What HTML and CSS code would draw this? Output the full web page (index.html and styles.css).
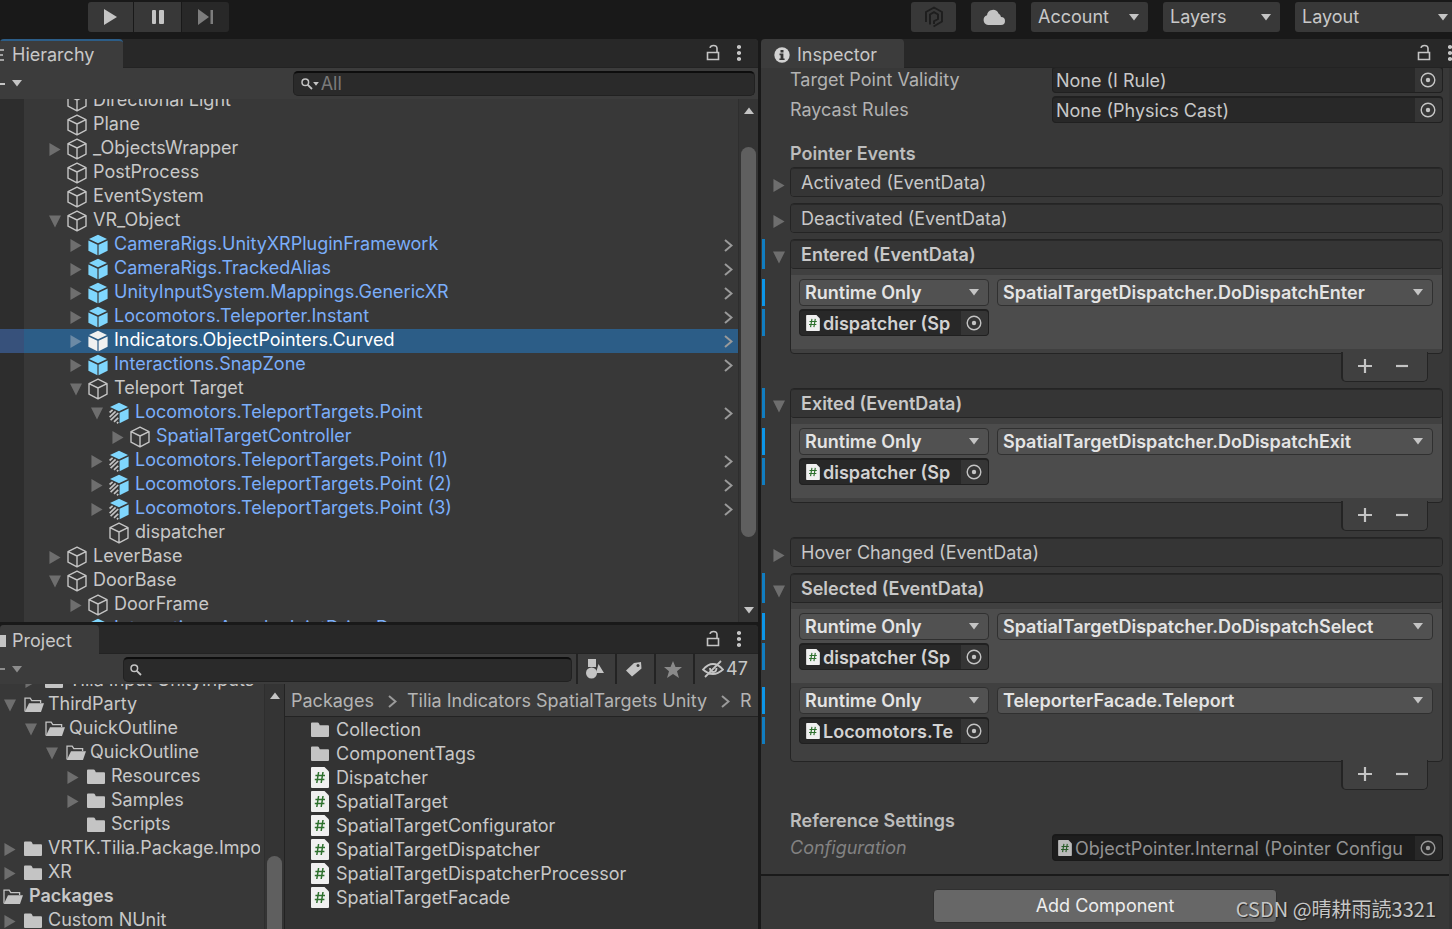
FILE: index.html
```html
<!DOCTYPE html>
<html lang="en">
<head>
<meta charset="utf-8">
<title>Editor</title>
<link rel="stylesheet" href="styles.css">
</head>
<body>
<svg class="sprites" aria-hidden="true">
  <symbol id="cube" viewBox="0 0 20 22"><path d="M10 1.2 19 5.6V16.2L10 20.8 1 16.2V5.6ZM1 5.6 10 10 19 5.6M10 10V20.8" fill="none" stroke="#c4c4c4" stroke-width="1.4" stroke-linejoin="round"/></symbol>
  <symbol id="prefab" viewBox="0 0 20 22"><path d="M10 .8 19 5 10 9.2 1 5ZM.4 6.5 9.4 10.7V21.2L.4 16.8ZM19.6 6.5 10.6 10.7V21.2L19.6 16.8Z" fill="currentColor"/></symbol>
  <symbol id="variant" viewBox="0 0 20 22"><path d="M10 .8 19 5 10 9.2 1 5ZM19.6 6.5 10.6 10.7V21.2L19.6 16.8Z" fill="currentColor"/><path d="M.6 10.5 3.6 7.8M.6 15.2 6.6 9.4M1.6 18.2 9.2 11M5 19.8 9.2 15.8M8 21.3 9.2 20" stroke="#c4c4c4" stroke-width="1.7" fill="none"/></symbol>
  <symbol id="right" viewBox="0 0 12 14"><path d="M0 0 12 7 0 14Z" fill="currentColor"/></symbol>
  <symbol id="down" viewBox="0 0 12 12"><path d="M0 0H12L6 12Z" fill="currentColor"/></symbol>
  <symbol id="caret" viewBox="0 0 10 7"><path d="M0 0H10L5 6.5Z" fill="currentColor"/></symbol>
  <symbol id="chevron" viewBox="0 0 9 13"><path d="M1 1 7.5 6.5 1 12" fill="none" stroke="currentColor" stroke-width="2"/></symbol>
  <symbol id="folder" viewBox="0 0 20 20"><path d="M0 3.5Q0 2.5 1 2.5H6.5Q7.5 2.5 8 3.5L8.8 5.2H17Q18 5.2 18 6.2V16Q18 17 17 17H1Q0 17 0 16Z" fill="#c4c4c4"/></symbol>
  <symbol id="open" viewBox="0 0 20 20"><path d="M1 16.5V3.2H6.2L7.8 5.6H16.6V8" fill="none" stroke="#c4c4c4" stroke-width="1.3"/><path d="M5 8.2H20L17 17H.8Z" fill="#c4c4c4"/></symbol>
  <symbol id="script" viewBox="0 0 18 21"><path d="M1 0H13.5L18 4.5V20Q18 21 17 21H1Q0 21 0 20V1Q0 0 1 0Z" fill="#f0f0f0"/><path d="M7.6 5 5.8 16M12 5 10.2 16M4.4 8.6H14M3.8 12.4H13.4" stroke="#2d702d" stroke-width="1.5" fill="none"/></symbol>
  <symbol id="lock" viewBox="0 0 14 17"><path d="M1.5 8.5H12.5V15.5H1.5ZM11 8V4.5Q11 1.5 7.5 1.5 4.5 1.5 4 3.8" fill="none" stroke="#c4c4c4" stroke-width="1.6"/></symbol>
  <symbol id="dots" viewBox="0 0 4 16"><path d="M0 1Q2-1 4 1V3Q2 5 0 3ZM0 7Q2 5 4 7V9Q2 11 0 9ZM0 13Q2 11 4 13V15Q2 17 0 15Z" fill="#c4c4c4"/></symbol>
  <symbol id="search" viewBox="0 0 14 12"><circle cx="4.3" cy="4.3" r="3.3" fill="none" stroke="#c4c4c4" stroke-width="1.5"/><path d="M6.8 6.8 11 11" stroke="#c4c4c4" stroke-width="1.8"/></symbol>
  <symbol id="target" viewBox="0 0 16 16"><circle cx="8" cy="8" r="6.8" fill="none" stroke="currentColor" stroke-width="1.4"/><circle cx="8" cy="8" r="2.2" fill="currentColor"/></symbol>
  <symbol id="plus" viewBox="0 0 14 14"><path d="M7 0V14M0 7H14" stroke="#c4c4c4" stroke-width="2.2"/></symbol>
  <symbol id="minus" viewBox="0 0 12 14"><path d="M0 7H12" stroke="#c4c4c4" stroke-width="2.2"/></symbol>
</svg>

<header class="topbar">
  <div class="play-group">
    <button class="tool" aria-label="Play"><svg width="13" height="16" viewBox="0 0 13 16"><path d="M0 0 13 8 0 16Z" fill="#c4c4c4"/></svg></button>
    <button class="tool" aria-label="Pause"><svg width="14" height="16" viewBox="0 0 14 16"><rect x="1" y="1" width="4" height="14" rx="1" fill="#c4c4c4"/><rect x="8" y="1" width="5" height="14" rx="1" fill="#c4c4c4"/></svg></button>
    <button class="tool off" aria-label="Step"><svg width="16" height="16" viewBox="0 0 16 16"><path d="M0 0 11 8 0 16ZM12.5 1H15V15H12.5Z" fill="#7d7d7d"/></svg></button>
  </div>
  <div class="top-right">
    <button class="tool round" aria-label="Plastic SCM"><svg width="20" height="22" viewBox="0 0 20 22"><path d="M2 16V6L10 1.5 18 6V15.5L9.5 20.5M6 18.5V8.5L10 6.2 14 8.5V13L10 15.3V18" fill="none" stroke="#1e1e1e" stroke-width="1.9"/></svg></button>
    <button class="tool round" aria-label="Cloud"><svg width="22" height="16" viewBox="0 0 22 16"><path d="M5 16A5 5 0 0 1 4 6.3 6 6 0 0 1 15.5 4.5 4.5 4.5 0 0 1 18 8 4 4 0 0 1 18 16Z" fill="#c4c4c4"/></svg></button>
    <div class="drop"><select aria-label="Account"><option>Account</option></select><svg class="caret"><use href="#caret"/></svg></div>
    <div class="drop"><select aria-label="Layers"><option>Layers</option></select><svg class="caret"><use href="#caret"/></svg></div>
    <div class="drop wide"><select aria-label="Layout"><option>Layout</option></select><svg class="caret"><use href="#caret"/></svg></div>
  </div>
</header>

<main class="workspace">
  <div class="left">
    <section class="panel hierarchy">
      <div class="tabs">
        <button class="tab active"><svg width="4" height="12" viewBox="0 0 4 12"><path d="M0 1H4M0 6H3M0 11H4" stroke="#c4c4c4" stroke-width="1.4"/></svg>Hierarchy</button>
        <div class="tab-tools"><svg class="lock"><use href="#lock"/></svg><svg class="dots"><use href="#dots"/></svg></div>
      </div>
      <div class="bar">
        <button class="add" aria-label="Create"><i></i><svg class="caret"><use href="#caret"/></svg></button>
        <label class="search hsearch"><svg width="14" height="12"><use href="#search"/></svg><svg class="mini"><use href="#caret"/></svg><input type="text" placeholder="All" aria-label="Search hierarchy"></label>
      </div>
      <div class="view">
        <ul class="tree scene">
          <li class="l0"><svg class="cube"><use href="#cube"/></svg><span>Directional Light</span></li>
          <li class="l0"><svg class="cube"><use href="#cube"/></svg><span>Plane</span></li>
          <li class="l0"><svg class="fold"><use href="#right"/></svg><svg class="cube"><use href="#cube"/></svg><span>_ObjectsWrapper</span></li>
          <li class="l0"><svg class="cube"><use href="#cube"/></svg><span>PostProcess</span></li>
          <li class="l0"><svg class="cube"><use href="#cube"/></svg><span>EventSystem</span></li>
          <li class="l0"><svg class="fold"><use href="#down"/></svg><svg class="cube"><use href="#cube"/></svg><span>VR_Object</span></li>
          <li class="l1 pre"><svg class="fold"><use href="#right"/></svg><svg class="cube"><use href="#prefab"/></svg><span>CameraRigs.UnityXRPluginFramework</span><svg class="chev"><use href="#chevron"/></svg></li>
          <li class="l1 pre"><svg class="fold"><use href="#right"/></svg><svg class="cube"><use href="#prefab"/></svg><span>CameraRigs.TrackedAlias</span><svg class="chev"><use href="#chevron"/></svg></li>
          <li class="l1 pre"><svg class="fold"><use href="#right"/></svg><svg class="cube"><use href="#prefab"/></svg><span>UnityInputSystem.Mappings.GenericXR</span><svg class="chev"><use href="#chevron"/></svg></li>
          <li class="l1 pre"><svg class="fold"><use href="#right"/></svg><svg class="cube"><use href="#prefab"/></svg><span>Locomotors.Teleporter.Instant</span><svg class="chev"><use href="#chevron"/></svg></li>
          <li class="l1 pre sel"><svg class="fold"><use href="#right"/></svg><svg class="cube"><use href="#prefab"/></svg><span>Indicators.ObjectPointers.Curved</span><svg class="chev"><use href="#chevron"/></svg></li>
          <li class="l1 pre"><svg class="fold"><use href="#right"/></svg><svg class="cube"><use href="#prefab"/></svg><span>Interactions.SnapZone</span><svg class="chev"><use href="#chevron"/></svg></li>
          <li class="l1"><svg class="fold"><use href="#down"/></svg><svg class="cube"><use href="#cube"/></svg><span>Teleport Target</span></li>
          <li class="l2 pre"><svg class="fold"><use href="#down"/></svg><svg class="cube"><use href="#variant"/></svg><span>Locomotors.TeleportTargets.Point</span><svg class="chev"><use href="#chevron"/></svg></li>
          <li class="l3 pre"><svg class="fold"><use href="#right"/></svg><svg class="cube"><use href="#cube"/></svg><span>SpatialTargetController</span></li>
          <li class="l2 pre"><svg class="fold"><use href="#right"/></svg><svg class="cube"><use href="#variant"/></svg><span>Locomotors.TeleportTargets.Point (1)</span><svg class="chev"><use href="#chevron"/></svg></li>
          <li class="l2 pre"><svg class="fold"><use href="#right"/></svg><svg class="cube"><use href="#variant"/></svg><span>Locomotors.TeleportTargets.Point (2)</span><svg class="chev"><use href="#chevron"/></svg></li>
          <li class="l2 pre"><svg class="fold"><use href="#right"/></svg><svg class="cube"><use href="#variant"/></svg><span>Locomotors.TeleportTargets.Point (3)</span><svg class="chev"><use href="#chevron"/></svg></li>
          <li class="l2"><svg class="cube"><use href="#cube"/></svg><span>dispatcher</span></li>
          <li class="l0"><svg class="fold"><use href="#right"/></svg><svg class="cube"><use href="#cube"/></svg><span>LeverBase</span></li>
          <li class="l0"><svg class="fold"><use href="#down"/></svg><svg class="cube"><use href="#cube"/></svg><span>DoorBase</span></li>
          <li class="l1"><svg class="fold"><use href="#right"/></svg><svg class="cube"><use href="#cube"/></svg><span>DoorFrame</span></li>
          <li class="l1 pre"><svg class="fold"><use href="#right"/></svg><svg class="cube"><use href="#prefab"/></svg><span>Interactions.AngularJointDrive.Door</span></li>
        </ul>
        <div class="scroll"><svg class="caret flip"><use href="#caret"/></svg><div class="thumb"></div><svg class="caret"><use href="#caret"/></svg></div>
      </div>
    </section>

    <section class="panel project">
      <div class="tabs">
        <button class="tab short"><svg width="6" height="12" viewBox="0 0 6 12"><path d="M0 0H6V12H0Z" fill="#c4c4c4"/></svg>Project</button>
        <div class="tab-tools"><svg class="lock"><use href="#lock"/></svg><svg class="dots"><use href="#dots"/></svg></div>
      </div>
      <div class="bar">
        <button class="add dim" aria-label="Create asset"><i></i><svg class="caret"><use href="#caret"/></svg></button>
        <label class="search psearch"><svg width="14" height="12"><use href="#search"/></svg><input type="text" aria-label="Search project"></label>
        <div class="filters">
          <button aria-label="Filter by type"><svg width="18" height="20" viewBox="0 0 18 20"><path d="M2 0H10V8H2ZM12.5 5 18 14H10Z" fill="#c4c4c4"/><circle cx="5.5" cy="14" r="5.5" fill="#c4c4c4"/></svg></button>
          <button aria-label="Filter by label"><svg width="16" height="16" viewBox="0 0 16 16"><path d="M8 2 15 1 15.5 7.5 6 15.5 0 9.5Z" fill="#c4c4c4"/><circle cx="12" cy="4.5" r="1.5" fill="#3c3c3c"/></svg></button>
          <button aria-label="Favorites"><svg width="18" height="17" viewBox="0 0 18 17"><path d="M9 0 11.5 6H18L13 10.2 15 17 9 13 3 17 5 10.2 0 6H6.5Z" fill="#8a8a8a"/></svg></button>
          <button class="hidden-count"><svg width="22" height="18" viewBox="0 0 22 18"><path d="M1 9.5Q11-1.5 21 9.5 11 18.5 1 9.5ZM8 8Q8 12 11 12 14.5 12 14.5 8M3 17 19 1" fill="none" stroke="#c4c4c4" stroke-width="1.8"/></svg>47</button>
        </div>
      </div>
      <div class="split">
        <div class="view folders">
          <ul class="tree assets">
            <li class="l2"><svg class="fold"><use href="#right"/></svg><svg class="ico"><use href="#folder"/></svg><span>Tilia Input UnityInputs</span></li>
            <li class="l1"><svg class="fold"><use href="#down"/></svg><svg class="ico"><use href="#open"/></svg><span>ThirdParty</span></li>
            <li class="l2"><svg class="fold"><use href="#down"/></svg><svg class="ico"><use href="#open"/></svg><span>QuickOutline</span></li>
            <li class="l3"><svg class="fold"><use href="#down"/></svg><svg class="ico"><use href="#open"/></svg><span>QuickOutline</span></li>
            <li class="l4"><svg class="fold"><use href="#right"/></svg><svg class="ico"><use href="#folder"/></svg><span>Resources</span></li>
            <li class="l4"><svg class="fold"><use href="#right"/></svg><svg class="ico"><use href="#folder"/></svg><span>Samples</span></li>
            <li class="l4"><svg class="ico"><use href="#folder"/></svg><span>Scripts</span></li>
            <li class="l1"><svg class="fold"><use href="#right"/></svg><svg class="ico"><use href="#folder"/></svg><span>VRTK.Tilia.Package.Importer</span></li>
            <li class="l1"><svg class="fold"><use href="#right"/></svg><svg class="ico"><use href="#folder"/></svg><span>XR</span></li>
            <li class="l0 root"><svg class="ico"><use href="#open"/></svg><span>Packages</span></li>
            <li class="l1"><svg class="fold"><use href="#right"/></svg><svg class="ico"><use href="#folder"/></svg><span>Custom NUnit</span></li>
          </ul>
          <div class="scroll low"><svg class="caret flip"><use href="#caret"/></svg><div class="thumb"></div></div>
        </div>
        <div class="contents">
          <nav class="crumbs"><a href="#">Packages</a><svg class="chev"><use href="#chevron"/></svg><a href="#">Tilia Indicators SpatialTargets Unity</a><svg class="chev"><use href="#chevron"/></svg><a href="#">R</a></nav>
          <ul class="tree files">
            <li><svg class="ico"><use href="#folder"/></svg><span>Collection</span></li>
            <li><svg class="ico"><use href="#folder"/></svg><span>ComponentTags</span></li>
            <li><svg class="cs"><use href="#script"/></svg><span>Dispatcher</span></li>
            <li><svg class="cs"><use href="#script"/></svg><span>SpatialTarget</span></li>
            <li><svg class="cs"><use href="#script"/></svg><span>SpatialTargetConfigurator</span></li>
            <li><svg class="cs"><use href="#script"/></svg><span>SpatialTargetDispatcher</span></li>
            <li><svg class="cs"><use href="#script"/></svg><span>SpatialTargetDispatcherProcessor</span></li>
            <li><svg class="cs"><use href="#script"/></svg><span>SpatialTargetFacade</span></li>
          </ul>
        </div>
      </div>
    </section>
  </div>

  <section class="panel inspector">
    <div class="tabs">
      <button class="tab info"><svg width="16" height="16" viewBox="0 0 16 16"><circle cx="8" cy="8" r="7.7" fill="#d2d2d2"/><path d="M6.5 3H9.5V5.4H6.5ZM5.5 6.6H9.4V11.4H10.6V13H5.4V11.4H6.6V8.2H5.5Z" fill="#333"/></svg>Inspector</button>
      <div class="tab-tools"><svg class="lock"><use href="#lock"/></svg><svg class="dots"><use href="#dots"/></svg></div>
    </div>
    <div class="inspect-view">
      <div class="fields">
        <div class="prop"><label for="validity">Target Point Validity</label><div class="object"><input id="validity" type="text" readonly value="None (I Rule)"><button aria-label="Pick rule"><svg><use href="#target"/></svg></button></div></div>
        <div class="prop"><label for="raycast">Raycast Rules</label><div class="object"><input id="raycast" type="text" readonly value="None (Physics Cast)"><button aria-label="Pick raycast"><svg><use href="#target"/></svg></button></div></div>
        <h2>Pointer Events</h2>
        <div class="events">
          <div class="event"><svg class="fold"><use href="#right"/></svg><div class="box"><h3>Activated (EventData)</h3></div></div>
          <div class="event"><svg class="fold"><use href="#right"/></svg><div class="box"><h3>Deactivated (EventData)</h3></div></div>
          <div class="event expanded"><svg class="fold"><use href="#down"/></svg>
            <div class="box"><h3>Entered (EventData)</h3>
              <div class="calls">
                <div class="call hot">
                  <div class="drop lit marked"><select aria-label="Call state"><option>Runtime Only</option></select><svg class="caret"><use href="#caret"/></svg></div>
                  <div class="drop lit"><select aria-label="Function"><option>SpatialTargetDispatcher.DoDispatchEnter</option></select><svg class="caret"><use href="#caret"/></svg></div>
                  <div class="object marked"><svg class="cs"><use href="#script"/></svg><input type="text" readonly aria-label="Target" value="dispatcher (Sp"><button aria-label="Pick target"><svg><use href="#target"/></svg></button></div>
                </div>
              </div>
            </div>
            <div class="footer"><button aria-label="Add"><svg class="plus"><use href="#plus"/></svg></button><button aria-label="Remove"><svg class="minus"><use href="#minus"/></svg></button></div>
          </div>
          <div class="event expanded"><svg class="fold"><use href="#down"/></svg>
            <div class="box"><h3>Exited (EventData)</h3>
              <div class="calls">
                <div class="call hot">
                  <div class="drop lit marked"><select aria-label="Call state"><option>Runtime Only</option></select><svg class="caret"><use href="#caret"/></svg></div>
                  <div class="drop lit"><select aria-label="Function"><option>SpatialTargetDispatcher.DoDispatchExit</option></select><svg class="caret"><use href="#caret"/></svg></div>
                  <div class="object marked"><svg class="cs"><use href="#script"/></svg><input type="text" readonly aria-label="Target" value="dispatcher (Sp"><button aria-label="Pick target"><svg><use href="#target"/></svg></button></div>
                </div>
              </div>
            </div>
            <div class="footer"><button aria-label="Add"><svg class="plus"><use href="#plus"/></svg></button><button aria-label="Remove"><svg class="minus"><use href="#minus"/></svg></button></div>
          </div>
          <div class="event"><svg class="fold"><use href="#right"/></svg><div class="box"><h3>Hover Changed (EventData)</h3></div></div>
          <div class="event expanded"><svg class="fold"><use href="#down"/></svg>
            <div class="box"><h3>Selected (EventData)</h3>
              <div class="calls">
                <div class="call hot">
                  <div class="drop lit marked"><select aria-label="Call state"><option>Runtime Only</option></select><svg class="caret"><use href="#caret"/></svg></div>
                  <div class="drop lit"><select aria-label="Function"><option>SpatialTargetDispatcher.DoDispatchSelect</option></select><svg class="caret"><use href="#caret"/></svg></div>
                  <div class="object marked"><svg class="cs"><use href="#script"/></svg><input type="text" readonly aria-label="Target" value="dispatcher (Sp"><button aria-label="Pick target"><svg><use href="#target"/></svg></button></div>
                </div>
                <div class="call">
                  <div class="drop lit marked"><select aria-label="Call state"><option>Runtime Only</option></select><svg class="caret"><use href="#caret"/></svg></div>
                  <div class="drop lit"><select aria-label="Function"><option>TeleporterFacade.Teleport</option></select><svg class="caret"><use href="#caret"/></svg></div>
                  <div class="object marked"><svg class="cs"><use href="#script"/></svg><input type="text" readonly aria-label="Target" value="Locomotors.Te"><button aria-label="Pick target"><svg><use href="#target"/></svg></button></div>
                </div>
              </div>
            </div>
            <div class="footer"><button aria-label="Add"><svg class="plus"><use href="#plus"/></svg></button><button aria-label="Remove"><svg class="minus"><use href="#minus"/></svg></button></div>
          </div>
        </div>
        <h2 class="ref">Reference Settings</h2>
        <div class="prop disabled"><label for="config">Configuration</label><div class="object"><svg class="cs"><use href="#script"/></svg><input id="config" type="text" readonly value="ObjectPointer.Internal (Pointer Configu"><button aria-label="Pick configuration"><svg><use href="#target"/></svg></button></div></div>
      </div>
      <div class="add-row"><button class="add-component">Add Component</button></div>
    </div>
  </section>
</main>
<div class="watermark">CSDN @晴耕雨読3321</div>
</body>
</html>
```

FILE: styles.css
```css
* { box-sizing: border-box; }
html, body { height: 100%; }
body {
  margin: 0;
  display: flex;
  flex-direction: column;
  overflow: hidden;
  position: relative;
  background: #191919;
  color: #c8c8c8;
  font: 18px/22px Inter, "Liberation Sans", sans-serif;
}
button, input, select { font: inherit; color: inherit; margin: 0; padding: 0; border: 0; background: none; }
input { min-width: 0; outline: 0; }
select { appearance: none; width: 100%; }
ul { list-style: none; margin: 0; padding: 0; }
h2, h3 { margin: 0; font-size: 18px; font-weight: 600; }
svg { display: block; flex: none; }
.sprites { position: absolute; width: 0; height: 0; }
.caret { width: 10px; height: 7px; color: #c4c4c4; }
.flip { transform: rotate(180deg); }

.topbar { flex: none; height: 39px; padding: 2px 0 7px 88px; display: flex; justify-content: space-between; }
.play-group { display: flex; gap: 1px; }
.tool { width: 45px; height: 30px; display: flex; align-items: center; justify-content: center; background: #383838; }
.tool + .tool { width: 47px; }
.tool:first-child { border-radius: 3px 0 0 3px; }
.tool.off { background: #282828; border-radius: 0 3px 3px 0; }
.top-right { display: flex; gap: 15px; margin-right: -5px; }
.top-right .tool { width: 45px; border-radius: 3px; }
.drop { display: grid; grid-template-columns: minmax(0, 1fr) 24px; align-items: center; border-radius: 3px; background: #383838; width: 117px; height: 30px; }
.drop select { grid-area: 1 / 1 / 2 / 3; padding-left: 7px; height: 100%; }
.drop .caret { grid-area: 1 / 2; margin-left: 5px; pointer-events: none; }
.drop.wide { width: 162px; }

.workspace { flex: 1; min-height: 0; display: grid; grid-template-columns: 758fr 691fr; gap: 3px; }
.left { min-width: 0; min-height: 0; display: grid; grid-template-rows: 583fr 304fr; gap: 3px; }
.panel { min-width: 0; min-height: 0; display: flex; flex-direction: column; background: #383838; border-radius: 4px 4px 0 0; overflow: hidden; }
.tabs { flex: none; height: 29px; display: flex; justify-content: space-between; background: #282828; border-bottom: 1px solid #232323; }
.tab { display: flex; align-items: center; height: 29px; width: 123px; background: #3c3c3c; border-radius: 0 4px 0 0; padding-top: 2px; }
.tab svg { margin-right: 8px; }
.tab.active { border-top: 2px solid #2c5d87; padding-top: 0; }
.tab.short { width: 99px; }
.tab.short svg { margin-right: 6px; }
.tab.info { width: 143px; padding-left: 13px; border-radius: 4px 4px 0 0; }
.tab.info svg { margin-right: 7px; }
.tab-tools { display: flex; align-items: center; gap: 17px; padding: 0 17px 1px 0; }
.inspector .tab-tools { padding-right: 0; }
.lock { width: 14px; height: 17px; }
.dots { width: 4px; height: 16px; }
.bar { flex: none; height: 31px; display: flex; align-items: center; justify-content: space-between; background: #3c3c3c; }
.project .bar { height: 30px; }
.add { display: flex; align-items: center; gap: 7px; }
.add i { width: 5px; height: 2px; background: #c4c4c4; }
.dim { opacity: .6; }
.search { height: 25px; display: flex; align-items: center; background: #2a2a2a; border: 1px solid #212121; border-top: 2px solid #0d0d0d; border-radius: 5px; padding-left: 7px; }
.hsearch { flex: 0 0 61%; margin-right: 3px; }
.search .mini { width: 6px; height: 4px; margin: 0 2px 0 -2px; color: #c4c4c4; }
.search input { flex: 1; }
.search input::placeholder { color: #7a7a7a; opacity: 1; }
.psearch { flex: 1; margin: 0 4px 0 101px; padding-left: 6px; }
.filters { display: flex; height: 100%; }
.filters button { width: 39px; padding-right: 3px; border-left: 2px solid #232323; display: flex; align-items: center; justify-content: center; }
.filters .hidden-count { width: 65px; gap: 2px; }

.view { flex: 1; min-height: 0; min-width: 0; display: flex; overflow: hidden; }
.tree { flex: 1; min-width: 0; }
.tree li { height: 24px; display: flex; align-items: center; white-space: nowrap; overflow: hidden; }
.tree li > span { height: 24px; line-height: 22px; }
.scene { margin-top: -10px; background: linear-gradient(90deg, #2d2d2d 24px, transparent 24px); align-self: flex-start; }
.cube { width: 20px; height: 22px; margin-right: 6px; }
.fold { width: 12px; height: 13px; color: #6e6e6e; }
.tree .fold { margin: 0 6px 0 -18px; }
.scene .l0 { padding-left: 67px; }
.scene .l1 { padding-left: 88px; }
.scene .l2 { padding-left: 109px; }
.scene .l3 { padding-left: 130px; }
.pre { color: #7baefa; }
.pre .cube { color: #7fd6fd; }
.chev { width: 9px; height: 13px; color: #9a9a9a; }
.tree .chev { margin: 0 5px 0 auto; }
.sel { background: linear-gradient(90deg, #37517b 24px, #2c5d87 24px); color: #fff; }
.sel .cube { color: #f0f0f0; }
.sel .fold { color: #6c8aa5; }
.scroll { flex: none; width: 20px; display: flex; flex-direction: column; align-items: center; background: #343434; border-left: 1px solid #2e2e2e; padding: 8px 0; }
.scroll .thumb { width: 15px; border-radius: 8px; background: #5f5f5f; flex: 390 0 0; margin: 33px 0 70px; }

.split { flex: 1; min-height: 0; display: grid; grid-template-columns: 284fr 474fr; }
.assets { margin-top: -15px; }
.assets li { margin-right: 4px; }
.ico { width: 20px; height: 20px; margin-right: 4px; }
.assets .fold { margin-right: 8px; margin-left: -20px; }
.assets .l0 { padding-left: 3px; }
.assets .l1 { padding-left: 24px; }
.assets .l2 { padding-left: 45px; }
.assets .l3 { padding-left: 66px; }
.assets .l4 { padding-left: 87px; }
.root { font-weight: 600; }
.root .ico { margin-right: 6px; }
.low .thumb { margin: 157px 0 -20px; }
.contents { min-width: 0; background: #333; border-left: 1px solid #232323; }
.crumbs { height: 33px; display: flex; align-items: center; padding: 2px 0 0 6px; background: #3c3c3c; border-bottom: 1px solid #232323; overflow: hidden; white-space: nowrap; }
.crumbs a { color: #b4b4b4; text-decoration: none; }
.crumbs .chev { margin: 0 10px 0 14px; }
.files { padding-top: 2px; }
.files li { padding-left: 26px; }
.files .ico { margin: 0 5px 2px 0; }
.cs { width: 18px; height: 21px; }
.files .cs { margin: 0 7px 3px 0; }

.inspect-view { flex: 1; min-height: 0; overflow: hidden; border-right: 3px solid #333; }
.fields { margin-top: -2px; padding: 0 6px 13px 29px; border-bottom: 2px solid #1a1a1a; }
.prop { display: grid; grid-template-columns: 262fr 391fr; align-items: start; margin-bottom: 3px; }
.prop > label { color: #b2b2b2; line-height: 28px; height: 27px; }
.object { height: 27px; display: flex; align-items: center; min-width: 0; background: #282828; border: 1px solid #202020; border-top-width: 2px; border-radius: 4px; padding-left: 3px; }
.object input { flex: 1; width: 0; height: 24px; }
.object button { width: 27px; height: 100%; display: flex; align-items: center; justify-content: center; background: #353535; border-radius: 0 3px 3px 0; color: #c4c4c4; padding: 0 2px 1px 0; }
.object button svg { width: 16px; height: 16px; }
.object .cs { width: 14px; height: 16px; margin: 0 3px 0 2px; }
h2 { height: 41px; line-height: 56px; color: #bdbdbd; }
.events { display: flex; flex-direction: column; gap: 6px; }
.event { display: grid; grid-template-columns: 17px minmax(0, 1fr); margin-left: -17px; position: relative; }
.event > .fold { margin-top: 12px; }
.box { border: 1px solid #242424; border-radius: 4px; background: #404040; }
.box h3 { height: 28px; line-height: 28px; padding-left: 10px; background: #353535; border-top: 1px solid #282828; font-weight: 400; border-radius: 3px; }
.expanded .box h3 { height: 29px; font-weight: 600; border-bottom: 1px solid #242424; }
.calls { padding: 6px 0 4px; }
.call { display: grid; grid-template-columns: 190fr 436fr; gap: 3px 8px; padding: 4px 9px 13px 8px; font-weight: 600; }
.hot { background: #4c4c4c; }
.lit { width: auto; height: 27px; background: #515151; border: 1px solid #303030; border-radius: 4px; color: #e4e4e4; position: relative; }
.lit select { padding-left: 5px; }
.call .object { position: relative; }
.call .object input { color: #d2d2d2; }
.call .object .cs { margin: 0 3px 0 3px; }
.marked::before, .expanded::before { content: ""; position: absolute; width: 3px; background: #0d96e8; }
.marked::before { left: -38px; top: -1px; height: 27px; }
.object.marked::before { background: #117dc0; top: -2px; }
.expanded::before { left: -11px; top: 0; height: 30px; background: #117dc0; }
.footer { grid-column: 2; justify-self: end; width: 87px; height: 30px; margin: -2px 15px 0 0; padding: 0 4px 2px 0; display: flex; align-items: center; justify-content: center; gap: 24px; background: #404040; border: 1px solid #242424; border-left-width: 2px; border-top: 0; border-radius: 0 0 5px 5px; position: relative; }
.plus { width: 14px; height: 14px; }
.minus { width: 12px; height: 14px; }
.ref { height: 44px; line-height: 62px; }
.disabled { margin: 0; }
.disabled label { font-style: italic; color: #828282; }
.disabled .object { background: #1d1d1d; color: #929292; border-color: #191919; }
.disabled .object button { background: #282828; color: #999; }
.disabled .cs { opacity: .75; }
.add-row { display: flex; justify-content: center; padding-top: 13px; }
.add-component { width: 50%; height: 34px; background: #676767; border: 1px solid #303030; border-radius: 4px; color: #eee; }
.watermark { position: absolute; right: 16px; bottom: 5px; font: 20px/30px "Noto Sans CJK SC", sans-serif; color: #c6c6c6; text-shadow: 1px 1px 1px #222; }
```
